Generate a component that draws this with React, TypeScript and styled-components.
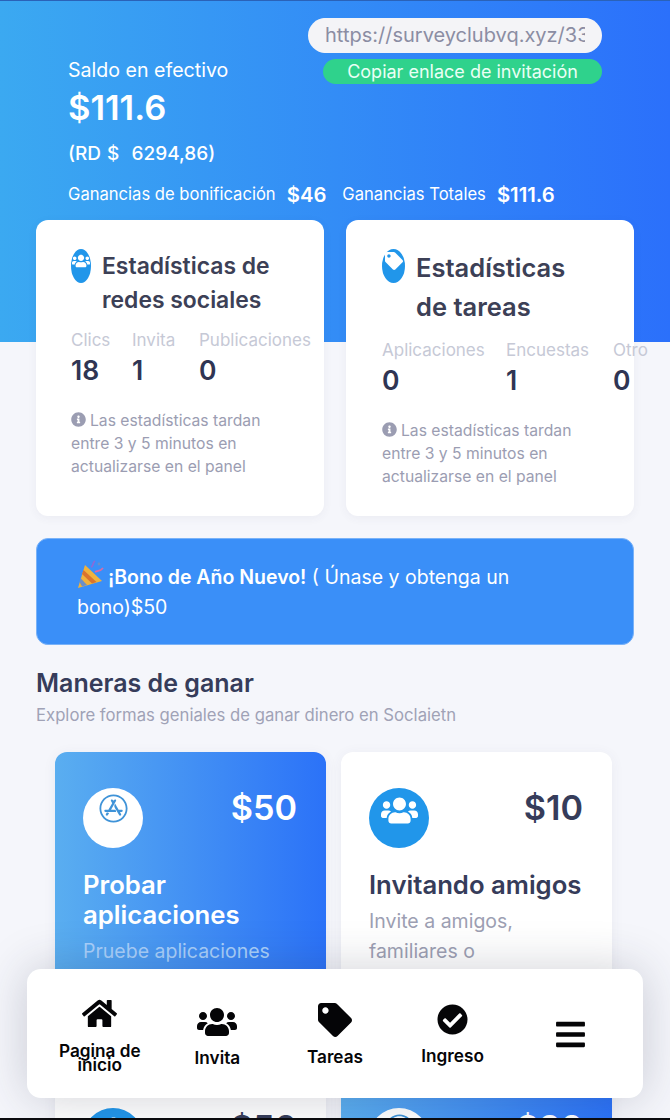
import React from "react";
import styled, { createGlobalStyle } from "styled-components";
import { FaHome, FaUsers, FaTag, FaCheckCircle, FaBars, FaInfoCircle, FaAppStore } from "react-icons/fa";

const Global = createGlobalStyle`
  html, body { margin: 0; padding: 0; background: #f5f6fb; }
  * { box-sizing: border-box; }
`;

const Page = styled.div`
  position: relative;
  width: 670px;
  height: 1120px;
  overflow: hidden;
  background: #f5f6fb;
  font-family: Inter, "Noto Sans", "Liberation Sans", sans-serif;
  border-bottom: 2px solid #0b0b0f;
`;
const Hero = styled.header`
  height: 342px;
  padding: 17px 68px 0;
  background: linear-gradient(90deg, #3ba9f1 0%, #2b70fb 100%);
  border-top: 1px solid #2a62b8;
  color: #fff;
`;
const HeroTop = styled.div`
  display: flex;
  justify-content: space-between;
`;
const Balance = styled.div`
  padding-top: 40px;
`;
const BalanceLabel = styled.div`
  font-size: 19.6px;
  line-height: 24px;
`;
const BalanceValue = styled.div`
  font-size: 34.5px;
  font-weight: 600;
  line-height: 40px;
  margin-top: 6px;
`;
const BalanceLocal = styled.div`
  font-size: 19px;
  font-weight: 500;
  line-height: 24px;
  margin-top: 14px;
  word-spacing: 1px;
  white-space: nowrap;
`;
const Invite = styled.div`
  width: 294px;
  display: flex;
  flex-direction: column;
  align-items: flex-end;
  gap: 6px;
`;
const LinkBox = styled.div`
  width: 294px;
  height: 35px;
  border-radius: 18px;
  border-style: solid;
  border-width: 0 17px;
  border-color: #f4f4f7;
  background: #f4f4f7;
  color: #8b8da3;
  font-size: 20px;
  line-height: 35px;
  white-space: nowrap;
  overflow: hidden;
`;
const CopyButton = styled.div`
  width: 279px;
  height: 25px;
  border-radius: 13px;
  background: #2fd28c;
  color: #eafff5;
  font-size: 18px;
  line-height: 25px;
  text-align: center;
  white-space: nowrap;
`;
const Earnings = styled.div`
  display: flex;
  align-items: center;
  height: 26px;
  margin-top: 15px;
  white-space: nowrap;
`;
const EarnLabel = styled.span`
  font-size: 16.6px;
`;
const EarnValue = styled.b<{ $gap: number }>`
  font-size: 20.3px;
  font-weight: 600;
  margin: 0 ${(p) => p.$gap}px 0 11px;
`;
const Content = styled.main`
  margin-top: -122px;
  padding: 0 36px;
`;
const StatsRow = styled.div`
  display: grid;
  grid-template-columns: 288px 288px;
  gap: 22px;
`;
const StatCard = styled.section<{ $left: number }>`
  height: 296px;
  padding: 28px 0 0 ${(p) => p.$left}px;
  border-radius: 12px;
  background: #fff;
  box-shadow: 0 2px 10px rgba(60, 70, 110, 0.06);
`;
const StatHead = styled.div`
  display: flex;
  gap: 11px;
  align-items: flex-start;
`;
const Oval = styled.div<{ $w: number }>`
  flex: none;
  width: ${(p) => p.$w}px;
  height: 34px;
  border-radius: 50%;
  background: #2196ea;
  color: #fff;
  display: flex;
  justify-content: center;
  padding-top: 3px;
  font-size: 18px;
  margin-top: 1px;
`;
const StatTitle = styled.h2<{ $size: number; $lh: number; $pt: number }>`
  margin: 0;
  padding-top: ${(p) => p.$pt}px;
  font-size: ${(p) => p.$size}px;
  line-height: ${(p) => p.$lh}px;
  font-weight: 600;
  color: #3c4056;
`;
const StatNums = styled.div<{ $top: number }>`
  display: flex;
  margin-top: ${(p) => p.$top}px;
`;
const StatCol = styled.div<{ $w: number }>`
  width: ${(p) => p.$w}px;
  flex: none;
`;
const StatLabel = styled.div`
  font-size: 17px;
  line-height: 22px;
  color: #c6c9d6;
  white-space: nowrap;
`;
const StatValue = styled.div`
  font-size: 26.5px;
  font-weight: 600;
  line-height: 38px;
  color: #2f3553;
`;
const Note = styled.p`
  width: 220px;
  margin: 20px 0 0;
  font-size: 15.7px;
  line-height: 23px;
  color: #9b9db2;
  svg {
    vertical-align: -1px;
    margin-right: 4px;
    font-size: 15px;
  }
`;
const Banner = styled.div`
  height: 107px;
  margin-top: 22px;
  padding: 21px 60px 0 40px;
  border: 1px solid #79b2f8;
  border-radius: 12px;
  background: #3a8ff8;
  color: #fff;
  font-size: 19.5px;
  line-height: 30px;
  svg {
    vertical-align: -4px;
    margin-right: 4px;
  }
  b {
    font-weight: 600;
  }
`;
const SectionTitle = styled.h2`
  margin: 22px 0 0;
  font-size: 25px;
  line-height: 32px;
  font-weight: 600;
  color: #363c5a;
`;
const SectionSub = styled.p`
  margin: 6px 0 0;
  font-size: 16.7px;
  line-height: 20px;
  color: #a0a2b6;
`;
const EarnGrid = styled.div`
  display: grid;
  grid-template-columns: 271px 271px;
  column-gap: 15px;
  row-gap: 20px;
  margin: 27px 0 0 19px;
`;
const EarnCard = styled.article<{ $blue?: boolean }>`
  height: 300px;
  padding: 36px 29px 0 28px;
  border-radius: 12px;
  background: ${(p) => (p.$blue ? "linear-gradient(90deg, #5aaef0 0%, #2b72f8 100%)" : "#fff")};
  color: ${(p) => (p.$blue ? "#fff" : "#363c5a")};
  box-shadow: 0 2px 14px rgba(60, 70, 110, 0.06);
`;
const EarnTop = styled.div`
  display: flex;
  justify-content: space-between;
  align-items: flex-start;
  height: 80px;
`;
const Circle = styled.div<{ $blue?: boolean }>`
  width: 60px;
  height: 60px;
  border-radius: 50%;
  display: flex;
  justify-content: center;
  background: ${(p) => (p.$blue ? "#2196ea" : "#fff")};
  color: ${(p) => (p.$blue ? "#fff" : "#3f93d8")};
`;
const CircleIcon = styled.div<{ $size: number; $top: number }>`
  display: flex;
  font-size: ${(p) => p.$size}px;
  margin-top: ${(p) => p.$top}px;
`;
const Price = styled.div`
  font-size: 34.2px;
  font-weight: 600;
  line-height: 40px;
`;
const EarnTitle = styled.h3`
  margin: 0;
  font-size: 25.7px;
  line-height: 30px;
  font-weight: 600;
  padding-top: 2px;
  white-space: nowrap;
`;
const EarnDesc = styled.p<{ $blue?: boolean }>`
  margin: 6px 0 0;
  font-size: 19.5px;
  line-height: 30px;
  color: ${(p) => (p.$blue ? "#a9d0fb" : "#9d9fb3")};
`;
const Nav = styled.nav`
  position: absolute;
  left: 27px;
  top: 969px;
  width: 616px;
  height: 129px;
  padding: 0 14px;
  display: grid;
  grid-template-columns: repeat(5, 1fr);
  border-radius: 14px;
  background: #fff;
  box-shadow: 0 0 48px rgba(40, 45, 70, 0.22);
`;
const NavItem = styled.div<{ $gap: number }>`
  display: flex;
  flex-direction: column;
  align-items: center;
  justify-content: center;
  gap: ${(p) => p.$gap}px;
  color: #050507;
`;
const NavIcon = styled.div<{ $size: number; $nudge?: number }>`
  display: flex;
  font-size: ${(p) => p.$size}px;
  margin-top: ${(p) => p.$nudge ?? 0}px;
`;
const NavLabel = styled.div`
  font-size: 17.2px;
  line-height: 14px;
  font-weight: 600;
  text-align: center;
  width: 100px;
`;

const Party = () => (
  <svg width="27" height="28" viewBox="0 0 27 28">
    <path d="M8 5 L25 21 L1 28 Z" fill="#f0b23c" />
    <path d="M6.5 10 L19.5 22 L15 23.5 L5 14 Z" fill="#d9742f" />
    <path d="M3.5 18 L10 25 L5 26.5 L2.5 22 Z" fill="#6a8fc9" />
    <path d="M14 7 C17 6 15 3 18 1" stroke="#8a6bd8" strokeWidth="1.7" fill="none" />
    <path d="M18 12 C21 10 23 12 26 8" stroke="#d86ba6" strokeWidth="1.7" fill="none" />
    <circle cx="22" cy="4" r="1.4" fill="#6a8fc9" />
  </svg>
);

const Stat = ({ w, label, value }: { w: number; label: string; value: string }) => (
  <StatCol $w={w}>
    <StatLabel>{label}</StatLabel>
    <StatValue>{value}</StatValue>
  </StatCol>
);

const Info = () => (
  <Note>
    <FaInfoCircle />
    Las estadísticas tardan entre 3 y 5 minutos en actualizarse en el panel
  </Note>
);

export default function App() {
  return (
    <Page>
      <Global />
      <Hero>
        <HeroTop>
          <Balance>
            <BalanceLabel>Saldo en efectivo</BalanceLabel>
            <BalanceValue>$111.6</BalanceValue>
            <BalanceLocal>(RD $ &nbsp;6294,86)</BalanceLocal>
          </Balance>
          <Invite>
            <LinkBox>https://surveyclubvq.xyz/33</LinkBox>
            <CopyButton>Copiar enlace de invitación</CopyButton>
          </Invite>
        </HeroTop>
        <Earnings>
          <EarnLabel>Ganancias de bonificación</EarnLabel>
          <EarnValue $gap={16}>$46</EarnValue>
          <EarnLabel>Ganancias Totales</EarnLabel>
          <EarnValue $gap={0}>$111.6</EarnValue>
        </Earnings>
      </Hero>
      <Content>
        <StatsRow>
          <StatCard $left={35}>
            <StatHead>
              <Oval $w={20}><FaUsers /></Oval>
              <StatTitle $size={22.9} $lh={34} $pt={1}>Estadísticas de redes sociales</StatTitle>
            </StatHead>
            <StatNums $top={12}>
              <Stat w={61} label="Clics" value="18" />
              <Stat w={67} label="Invita" value="1" />
              <Stat w={100} label="Publicaciones" value="0" />
            </StatNums>
            <Info />
          </StatCard>
          <StatCard $left={36}>
            <StatHead>
              <Oval $w={23}><FaTag /></Oval>
              <StatTitle $size={25.5} $lh={39} $pt={0}>Estadísticas<br />de tareas</StatTitle>
            </StatHead>
            <StatNums $top={13}>
              <Stat w={124} label="Aplicaciones" value="0" />
              <Stat w={107} label="Encuestas" value="1" />
              <Stat w={30} label="Otro" value="0" />
            </StatNums>
            <Info />
          </StatCard>
        </StatsRow>
        <Banner>
          <Party /><b>¡Bono de Año Nuevo!</b> ( Únase y obtenga un bono)$50
        </Banner>
        <SectionTitle>Maneras de ganar</SectionTitle>
        <SectionSub>Explore formas geniales de ganar dinero en Soclaietn</SectionSub>
        <EarnGrid>
          <EarnCard $blue>
            <EarnTop>
              <Circle><CircleIcon $size={29} $top={6}><FaAppStore /></CircleIcon></Circle>
              <Price>$50</Price>
            </EarnTop>
            <EarnTitle>Probar<br />aplicaciones</EarnTitle>
            <EarnDesc $blue>Pruebe aplicaciones</EarnDesc>
          </EarnCard>
          <EarnCard>
            <EarnTop>
              <Circle $blue><CircleIcon $size={37} $top={4}><FaUsers /></CircleIcon></Circle>
              <Price>$10</Price>
            </EarnTop>
            <EarnTitle>Invitando amigos</EarnTitle>
            <EarnDesc>Invite a amigos,<br />familiares o</EarnDesc>
          </EarnCard>
          <EarnCard>
            <EarnTop>
              <Circle $blue><CircleIcon $size={37} $top={4}><FaUsers /></CircleIcon></Circle>
              <Price>$50</Price>
            </EarnTop>
          </EarnCard>
          <EarnCard $blue>
            <EarnTop>
              <Circle><CircleIcon $size={29} $top={6}><FaAppStore /></CircleIcon></Circle>
              <Price>$30</Price>
            </EarnTop>
          </EarnCard>
        </EarnGrid>
      </Content>
      <Nav>
        <NavItem $gap={13}>
          <NavIcon $size={35}><FaHome /></NavIcon>
          <NavLabel>Pagina de inicio</NavLabel>
        </NavItem>
        <NavItem $gap={9}>
          <NavIcon $size={40}><FaUsers /></NavIcon>
          <NavLabel>Invita</NavLabel>
        </NavItem>
        <NavItem $gap={13}>
          <NavIcon $size={34}><FaTag /></NavIcon>
          <NavLabel>Tareas</NavLabel>
        </NavItem>
        <NavItem $gap={14}>
          <NavIcon $size={31}><FaCheckCircle /></NavIcon>
          <NavLabel>Ingreso</NavLabel>
        </NavItem>
        <NavItem $gap={0}>
          <NavIcon $size={33} $nudge={2}><FaBars /></NavIcon>
        </NavItem>
      </Nav>
    </Page>
  );
}
